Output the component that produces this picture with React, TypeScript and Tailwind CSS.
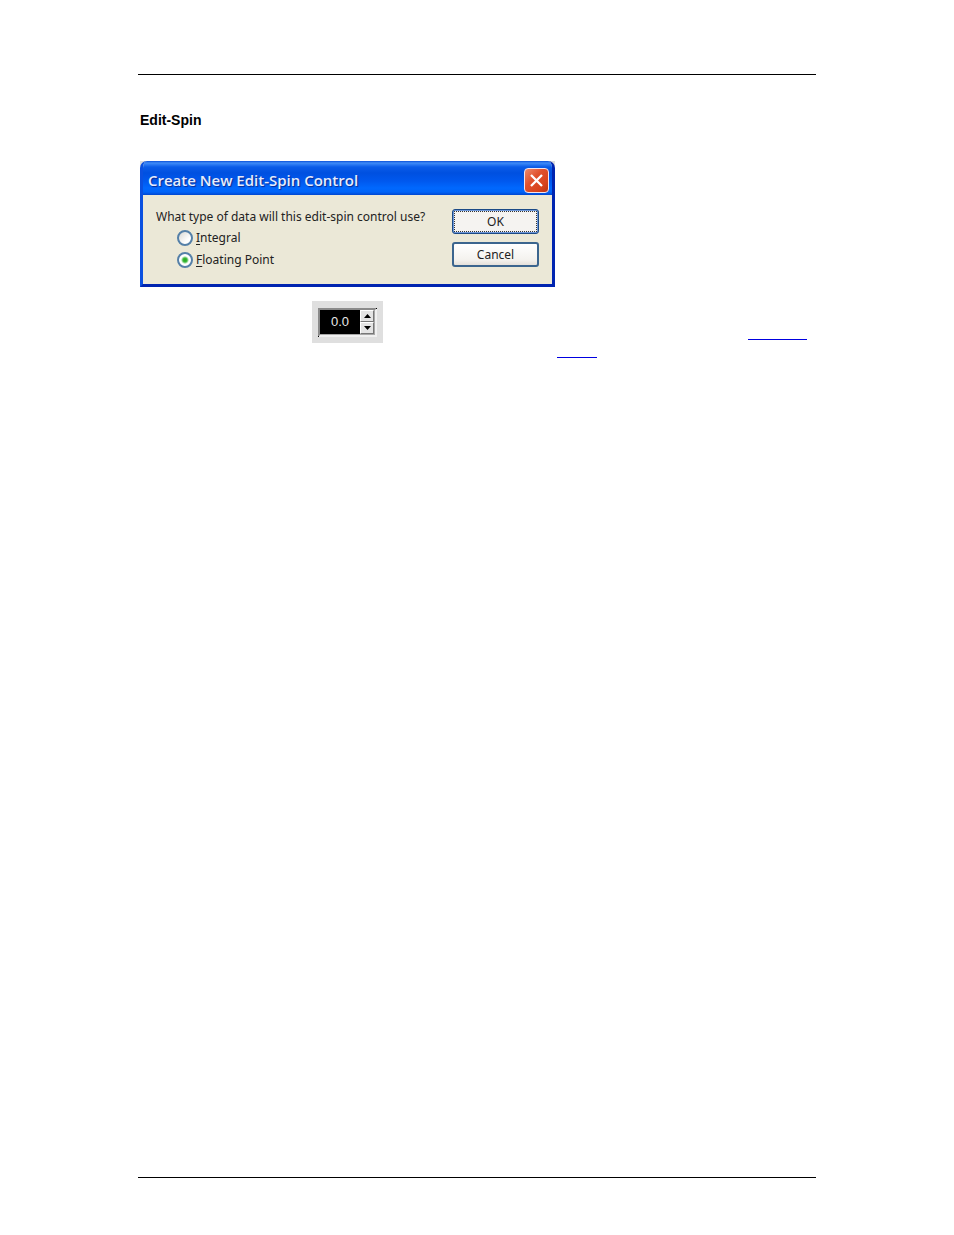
import { useState } from "react";

const DIALOG_FONT = "font-['Noto_Sans','DejaVu_Sans',sans-serif]";

function TitleBar() {
  return (
    <div className="flex h-[34px] items-center justify-between bg-[linear-gradient(to_bottom,#0a50d8_0px,#3f8cf8_2px,#0a5ce8_6px,#0050e0_12px,#0058ee_20px,#0068fe_27px,#0064f8_31px,#0046d0_34px)] pt-1 pr-[3px] pl-[5px]">
      <h2 className="font-['Open_Sans','Noto_Sans',sans-serif] text-[15px] leading-5 font-semibold whitespace-nowrap text-[#e6ecfc] [text-shadow:1px_1px_1px_#0a2a90]">
        Create New Edit-Spin Control
      </h2>
      <button
        type="button"
        aria-label="Close"
        className="flex h-[25px] w-[25px] items-center justify-center rounded-[4px] border border-[#f4e4ec] bg-[linear-gradient(135deg,#ee8a6c_0%,#e0512c_40%,#d8431c_75%,#b83412_100%)]"
      >
        <svg viewBox="0 0 15 15" className="h-[15px] w-[15px]" aria-hidden="true">
          <path d="M2 2 L13 13 M13 2 L2 13" stroke="#fff" strokeWidth="2.3" fill="none" />
        </svg>
      </button>
    </div>
  );
}

type RadioProps = {
  id: string;
  hotkey: string;
  rest: string;
  checked: boolean;
  onSelect: () => void;
};

function Radio({ id, hotkey, rest, checked, onSelect }: RadioProps) {
  return (
    <div className="flex h-[22px] items-center gap-[3px]">
      <input
        id={id}
        type="radio"
        name="data-type"
        checked={checked}
        onChange={onSelect}
        className="h-4 w-4 appearance-none rounded-full border-2 border-[#5580a8] bg-[linear-gradient(135deg,#d8d8d4,#ffffff_70%)] checked:bg-[radial-gradient(circle,#22a81e_0px,#3cb838_2px,#ffffff_4px)]"
      />
      <label htmlFor={id}>
        <span className="underline underline-offset-2">{hotkey}</span>
        {rest}
      </label>
    </div>
  );
}

function Dialog() {
  const [kind, setKind] = useState("float");
  return (
    <div className="w-[415px] max-w-full bg-[#dcdcdc]">
      <section
        className={`${DIALOG_FONT} overflow-hidden rounded-t-[7px] border-x-[3px] border-b-[3px] border-t-0 border-r-[#0024b0] border-b-[#0024b0] border-l-[#0a50e0] bg-[#ebe8d7] text-[12px] leading-4 text-[#222]`}
      >
        <TitleBar />
        <div className="flex justify-between pt-[14px] pr-[13px] pb-[13px] pl-[13px]">
          <fieldset>
            <legend className="whitespace-nowrap">What type of data will this edit-spin control use?</legend>
            <div className="pt-[2px] pl-[21px]">
              <Radio id="integral" hotkey="I" rest="ntegral" checked={kind === "int"} onSelect={() => setKind("int")} />
              <Radio id="floating" hotkey="F" rest="loating Point" checked={kind === "float"} onSelect={() => setKind("float")} />
            </div>
          </fieldset>
          <div className="flex w-[87px] flex-col gap-2">
            <button
              type="button"
              className="flex h-[25px] rounded-[3px] border border-[#1c4a86] bg-[#6f98da] p-px"
            >
              <span className="flex flex-1 items-center justify-center self-stretch border border-dotted border-[#333] bg-[#f5f3f1]">
                OK
              </span>
            </button>
            <button
              type="button"
              className="h-[25px] rounded-[3px] border-2 border-[#3b658e] bg-[linear-gradient(to_bottom,#ffffff,#f4f2ee_75%,#e4e0da)]"
            >
              Cancel
            </button>
          </div>
        </div>
      </section>
    </div>
  );
}

function SpinControl() {
  const [value, setValue] = useState(0);
  const arrow = "flex flex-1 items-center justify-center border border-t-white border-l-white border-r-[#777] border-b-[#777] bg-[#e4e4e4]";
  return (
    <div className="flex h-[42px] w-[71px] items-center justify-center bg-[#dfdfdf]">
      <div className="relative flex h-[29px] w-[59px] border-2 border-t-[#8a8a8a] border-l-[#8a8a8a] border-r-[#f0f0f0] border-b-[#f0f0f0] bg-[#a8a8a8] pr-px pb-px">
        <span className="absolute -top-[2px] -right-[2px] h-px w-px bg-black" />
        <span className="absolute -bottom-[2px] -left-[2px] h-px w-px bg-black" />
        <input
          aria-label="Value"
          readOnly
          value={value.toFixed(1)}
          className="w-10 bg-black text-center font-['Liberation_Sans',Arial,sans-serif] text-[13px] leading-4 text-[#e8e8e8]"
        />
        <div className="flex flex-1 flex-col">
          <button type="button" aria-label="Increase" className={arrow} onClick={() => setValue(value + 0.1)}>
            <svg viewBox="0 0 7 4" className="h-1 w-[7px]" aria-hidden="true"><path d="M0 4 L3.5 0 L7 4Z" fill="#000" /></svg>
          </button>
          <button type="button" aria-label="Decrease" className={arrow} onClick={() => setValue(value - 0.1)}>
            <svg viewBox="0 0 7 4" className="h-1 w-[7px]" aria-hidden="true"><path d="M0 0 L3.5 4 L7 0Z" fill="#000" /></svg>
          </button>
        </div>
      </div>
    </div>
  );
}

export default function App() {
  return (
    <div className="flex min-h-screen flex-col bg-white px-[138px] pt-[74px] pb-[57px]">
      <hr className="border-t border-black" />
      <main className="flex-1 pt-[37px] pl-[2px]">
        <h1 className="font-['Liberation_Sans',Arial,sans-serif] text-[14px] leading-4 font-bold text-black">Edit-Spin</h1>
        <div className="pt-[33px]">
          <Dialog />
        </div>
        <div className="flex items-end justify-between pt-[14px] pr-[9px] pl-[172px]">
          <SpinControl />
          <div className="mb-[3px] w-[59px] border-b border-[#0000e0]" />
        </div>
        <div className="pt-[14px] pl-[417px]">
          <div className="w-10 border-b border-[#0000e0]" />
        </div>
      </main>
      <hr className="border-t border-black" />
    </div>
  );
}
